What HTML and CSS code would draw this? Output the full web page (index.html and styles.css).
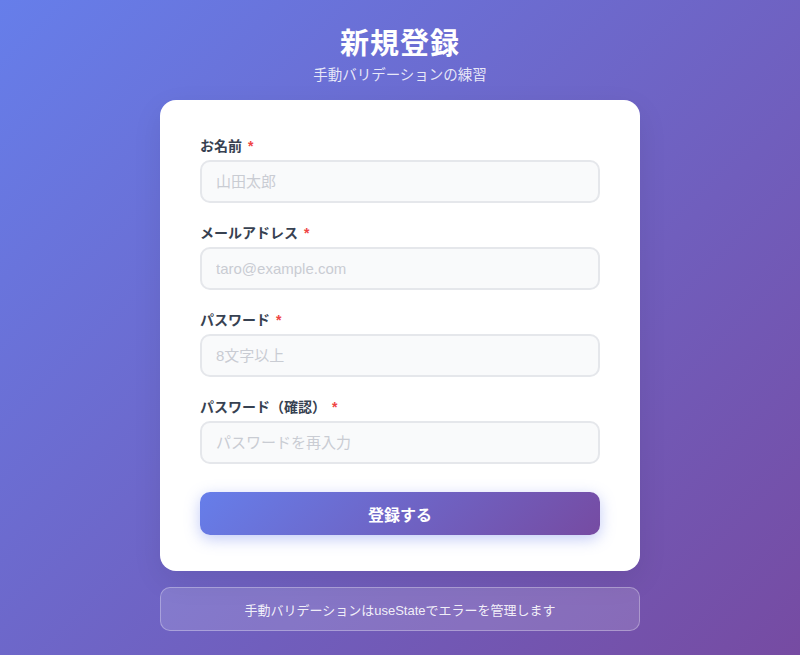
FILE: index.html
```html
<!DOCTYPE html>
<html lang="ja">
<head>
<meta charset="utf-8">
<title>新規登録</title>
<link rel="stylesheet" href="styles.css">
</head>
<body>
<div class="page">
  <header class="head">
    <h1 class="title">新規登録</h1>
    <p class="subtitle">手動バリデーションの練習</p>
  </header>
  <form class="card">
    <div class="field">
      <label class="label">お名前<span class="req">*</span></label>
      <input class="input" type="text" placeholder="山田太郎">
    </div>
    <div class="field">
      <label class="label">メールアドレス<span class="req">*</span></label>
      <input class="input" type="text" placeholder="taro@example.com">
    </div>
    <div class="field">
      <label class="label">パスワード<span class="req">*</span></label>
      <input class="input" type="password" placeholder="8文字以上">
    </div>
    <div class="field">
      <label class="label">パスワード（確認）<span class="req">*</span></label>
      <input class="input" type="password" placeholder="パスワードを再入力">
    </div>
    <button class="submit" type="button">登録する</button>
  </form>
  <div class="note">手動バリデーションはuseStateでエラーを管理します</div>
</div>
</body>
</html>
```
FILE: styles.css
```css
* { box-sizing: border-box; }
html, body { margin: 0; height: 100%; }
body {
  font-family: "Liberation Sans", "Noto Sans CJK JP", sans-serif;
  background: linear-gradient(135deg, #667eea 0%, #764ba2 100%);
  min-height: 655px;
}
.page {
  width: 480px;
  margin: 0 auto;
  padding-top: 25px;
  display: flex;
  flex-direction: column;
}
.head { text-align: center; color: #fff; }
.title {
  margin: 0;
  font-size: 29px;
  font-weight: 700;
  line-height: 38px;
  letter-spacing: 1px;
}
.subtitle {
  margin: 2px 0 0;
  font-size: 14.5px;
  line-height: 20px;
  color: rgba(255,255,255,0.85);
}
.card {
  margin-top: 15px;
  background: #fff;
  border-radius: 16px;
  padding: 36px 40px 36px;
  display: flex;
  flex-direction: column;
  box-shadow: 0 10px 30px rgba(0,0,0,0.08);
}
.field { display: flex; flex-direction: column; margin-bottom: 20px; }
.label {
  font-size: 14px;
  font-weight: 700;
  line-height: 20px;
  color: #374151;
  margin-bottom: 4px;
}
.req { color: #ef4444; margin-left: 6px; }
.input {
  height: 43px;
  border: 2px solid #e5e7eb;
  border-radius: 10px;
  background: #f9fafb;
  padding: 0 14px;
  font-family: "Liberation Sans", "Noto Sans CJK JP", sans-serif;
  font-size: 15px;
  color: #111827;
  outline: none;
}
.input::placeholder { color: #c9ccd3; }
.submit {
  margin-top: 8px;
  height: 43px;
  border: none;
  border-radius: 10px;
  background: linear-gradient(135deg, #667eea 0%, #764ba2 100%);
  color: #fff;
  font-family: "Liberation Sans", "Noto Sans CJK JP", sans-serif;
  font-size: 16px;
  font-weight: 700;
  box-shadow: 0 4px 15px rgba(102,126,234,0.4);
}
.note {
  margin-top: 16px;
  height: 44px;
  display: flex;
  align-items: center;
  justify-content: center;
  border: 1px solid rgba(255,255,255,0.3);
  border-radius: 10px;
  background: rgba(255,255,255,0.15);
  color: rgba(255,255,255,0.9);
  font-size: 13px;
}
```
